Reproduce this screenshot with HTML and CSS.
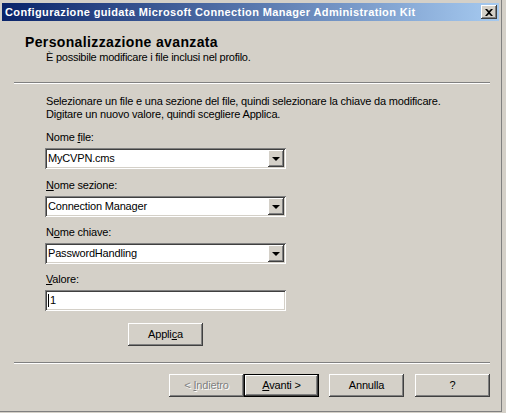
FILE: index.html
```html
<!DOCTYPE html>
<html lang="it">
<head>
<meta charset="utf-8">
<title>Personalizzazione avanzata</title>
<link rel="stylesheet" href="styles.css">
</head>
<body>
<div class="window">
  <div class="titlebar">
    <span class="title">Configurazione guidata Microsoft Connection Manager Administration Kit</span>
    <span class="close"><svg width="8" height="7" viewBox="0 0 8 7"><path d="M0 0h2l2 2 2-2h2L5 3.5 8 7H6L4 5 2 7H0l3-3.5z" fill="#000"/></svg></span>
  </div>
  <div class="header">
    <div class="h1">Personalizzazione avanzata</div>
    <div class="sub">È possibile modificare i file inclusi nel profilo.</div>
  </div>
  <div class="sep"></div>
  <div class="content">
    <p class="intro">Selezionare un file e una sezione del file, quindi selezionare la chiave da modificare.<br>Digitare un nuovo valore, quindi scegliere Applica.</p>
    <div class="label">Nome <u>f</u>ile:</div>
    <div class="combo first"><span class="val">MyCVPN.cms</span><span class="drop"><span class="arrow"></span></span></div>
    <div class="label"><u>N</u>ome sezione:</div>
    <div class="combo"><span class="val">Connection Manager</span><span class="drop"><span class="arrow"></span></span></div>
    <div class="label">N<u>o</u>me chiave:</div>
    <div class="combo"><span class="val">PasswordHandling</span><span class="drop"><span class="arrow"></span></span></div>
    <div class="label"><u>V</u>alore:</div>
    <div class="field"><span class="caret"></span><span class="val">1</span></div>
    <div class="apply-row"><span class="btn"><span>Appli<u>c</u>a</span></span></div>
  </div>
  <div class="sep sep-bottom"></div>
  <div class="footer">
    <span class="btn disabled"><span>&lt; <u>I</u>ndietro</span></span>
    <span class="btn default"><span><u>A</u>vanti &gt;</span></span>
    <span class="btn cancel"><span>Annulla</span></span>
    <span class="btn help"><span>?</span></span>
  </div>
</div>
</body>
</html>
```
FILE: styles.css
```css
html, body {
  margin: 0;
  padding: 0;
  background: #d4d0c8;
}
body {
  font-family: "Liberation Sans", Arial, sans-serif;
  font-size: 11px;
  line-height: 13px;
  letter-spacing: -0.18px;
  color: #000;
}
u { text-decoration: underline; text-underline-offset: 1px; }
.window {
  width: 501px;
  height: 408px;
  border-right: 1px solid #808080;
  border-bottom: 1px solid #808080;
  padding-top: 3px;
  box-sizing: content-box;
}
.titlebar {
  margin-left: 2px;
  width: 497px;
  height: 18px;
  background: linear-gradient(to right, #0a246a, #a6caf0);
  display: flex;
  align-items: center;
  justify-content: space-between;
  box-sizing: border-box;
  padding: 0 2px 0 3px;
}
.title {
  color: #fff;
  font-weight: bold;
  font-size: 11px;
  letter-spacing: 0.37px;
  white-space: nowrap;
}
.close {
  width: 16px;
  height: 14px;
  background: #d4d0c8;
  box-shadow: inset -1px -1px #404040, inset 1px 1px #fff, inset -2px -2px #808080;
  display: flex;
  align-items: center;
  justify-content: center;
}
.close svg { display: block; margin-left: -1px; }
.header {
  padding-left: 25px;
  margin-top: 13px;
}
.h1 {
  font-weight: bold;
  font-size: 14px;
  line-height: 16px;
  letter-spacing: 0.36px;
}
.sub {
  margin-top: 1px;
  padding-left: 21px;
  letter-spacing: -0.25px;
}
.sep {
  margin: 18px 0 0 14px;
  width: 476px;
  height: 0;
  border-top: 1px solid #808080;
  border-bottom: 1px solid #fff;
}
.sep-bottom { margin-top: 16px; }
.content {
  padding-left: 45px;
  padding-top: 11px;
}
.intro {
  margin: 0 0 10px 1px;
  white-space: nowrap;
}
.label {
  margin-left: 1px;
  margin-bottom: 4px;
}
.combo, .field {
  width: 241px;
  height: 21px;
  background: #fff;
  box-shadow: inset 1px 1px #808080, inset -1px -1px #fff, inset 2px 2px #404040, inset -2px -2px #d4d0c8;
  display: flex;
  align-items: center;
  box-sizing: border-box;
  padding: 2px;
  margin-bottom: 9px;
}
.combo.first { margin-bottom: 10px; }
.val {
  flex: 1;
  padding-left: 1px;
}
.drop {
  width: 16px;
  height: 17px;
  background: #d4d0c8;
  box-shadow: inset -1px -1px #404040, inset 1px 1px #fff, inset -2px -2px #808080;
  display: flex;
  align-items: center;
  justify-content: center;
}
.arrow {
  width: 0;
  height: 0;
  border-left: 4px solid transparent;
  border-right: 4px solid transparent;
  border-top: 4px solid #000;
  margin-top: 1px;
}
.field { padding-left: 3px; margin-bottom: 12px; }
.caret {
  width: 1px;
  height: 13px;
  background: #000;
}
.field .val { padding-left: 1px; }
.apply-row {
  padding-left: 83px;
}
.btn {
  display: inline-flex;
  align-items: center;
  justify-content: center;
  width: 75px;
  height: 23px;
  box-sizing: border-box;
  background: #d4d0c8;
  white-space: pre;
  box-shadow: inset -1px -1px #404040, inset 1px 1px #fff, inset -2px -2px #808080;
}
.footer {
  display: flex;
  padding-left: 169px;
  margin-top: 10px;
}
.btn.default {
  box-shadow: inset 0 0 0 1px #000, inset -2px -2px #404040, inset 2px 2px #fff, inset -3px -3px #808080;
}
.btn.cancel { margin-left: 10px; }
.btn.help { margin-left: 11px; }
.btn.disabled {
  color: #808080;
  text-shadow: 1px 1px #fff;
}
```
